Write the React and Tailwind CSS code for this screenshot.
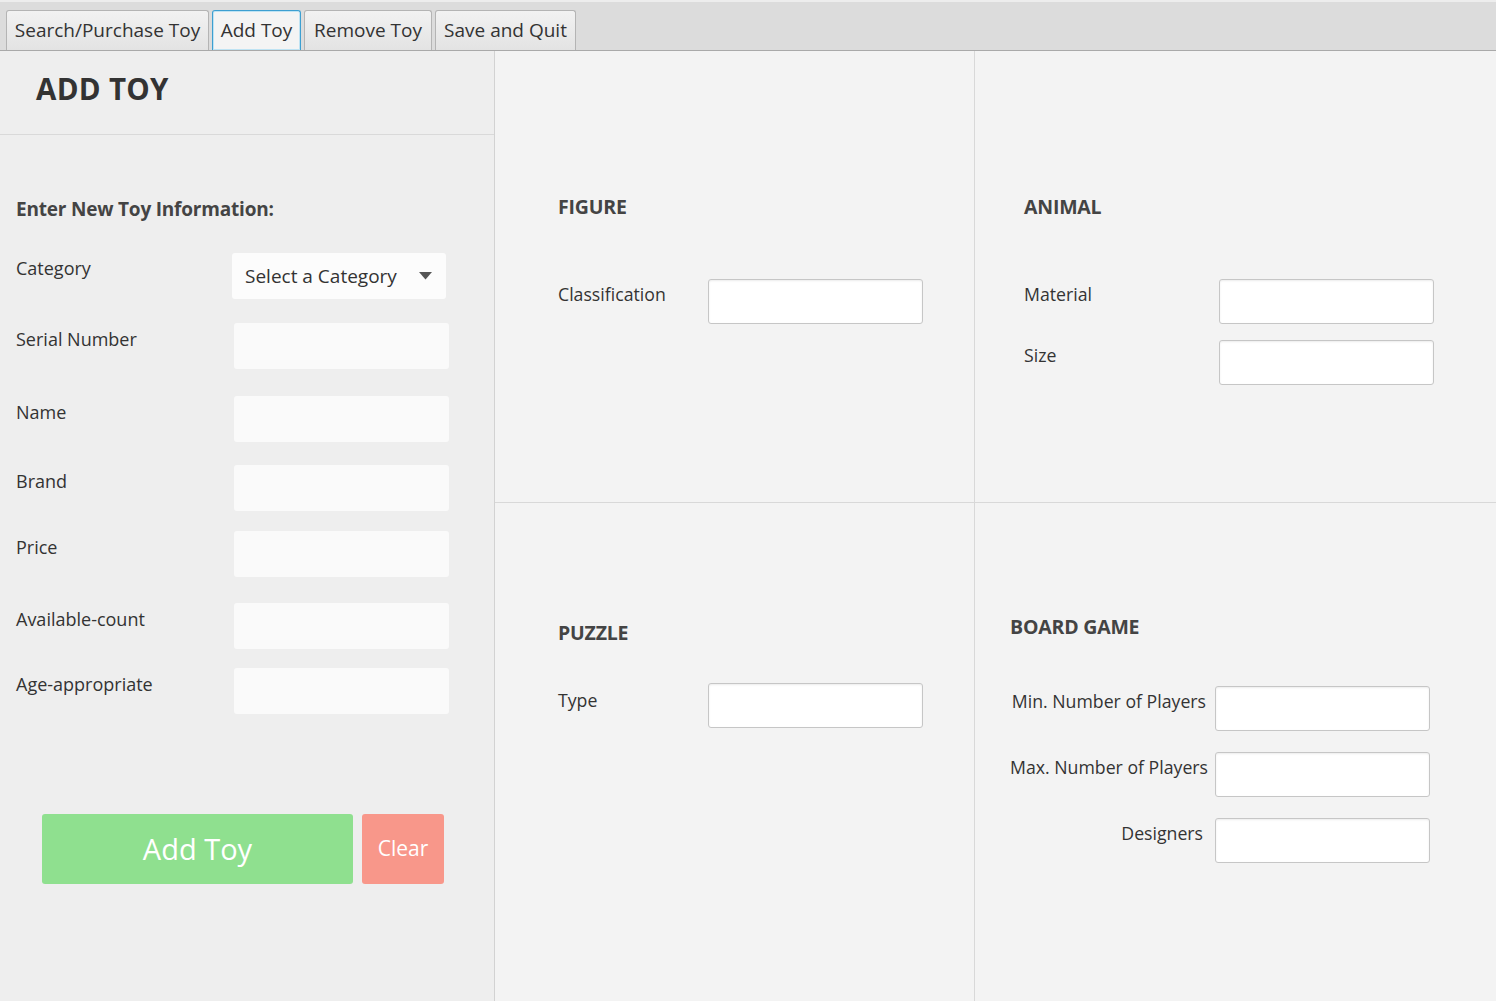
import React from 'react';

const font = { fontFamily: '"Open Sans", "Noto Sans", sans-serif' };

const tabs = [
    { label: 'Search/Purchase Toy', w: 'w-[203px]' },
    { label: 'Add Toy', w: 'w-[89px]', active: true },
    { label: 'Remove Toy', w: 'w-[128px]' },
    { label: 'Save and Quit', w: 'w-[141px]' },
];

const leftRows = [
    { label: 'Serial Number', mt: 'mt-[24px]' },
    { label: 'Name', mt: 'mt-[27px]' },
    { label: 'Brand', mt: 'mt-[23px]' },
    { label: 'Price', mt: 'mt-[20px]' },
    { label: 'Available-count', mt: 'mt-[26px]' },
    { label: 'Age-appropriate', mt: 'mt-[19px]' },
];

function Field({ className = '' }) {
    return (
        <input
            type="text"
            className={`h-[45px] w-[215px] rounded-[3px] border border-[#c6c6c6] bg-white shadow-[inset_0_1px_2px_rgba(0,0,0,0.08)] outline-none ${className}`}
        />
    );
}

function SectionTitle({ children }) {
    return <h2 className="text-[19.5px] font-bold leading-6 text-[#444] tracking-[-0.2px]">{children}</h2>;
}

export default function App() {
    return (
        <div style={font} className="flex h-[1001px] w-[1496px] flex-col overflow-hidden bg-[#f3f3f3] text-[#333]">
            {/* tab bar */}
            <div className="flex h-[51px] shrink-0 items-end gap-[3px] border-t-2 border-b border-t-[#ededed] border-b-[#a9a9a9] bg-[#dcdcdc] pl-[6px]">
                {tabs.map((t) => (
                    <div
                        key={t.label}
                        className={`flex h-[40px] ${t.w} items-center justify-center rounded-t-[3px] border border-b-0 text-[19px] leading-none ${
                            t.active
                                ? 'border-[#3d9fd1] bg-[#f4f4f4] shadow-[inset_0_0_0_1px_#bfe3f3]'
                                : 'border-[#b4b4b4] bg-gradient-to-b from-[#f2f2f2] to-[#e3e3e3]'
                        }`}
                    >
                        {t.label}
                    </div>
                ))}
            </div>

            <div className="flex flex-1">
                {/* left form panel */}
                <div className="w-[495px] shrink-0 border-r border-[#d2d2d2] bg-[#eeeeee]">
                    <div className="flex h-[84px] items-center border-b border-[#d9d9d9] pb-[6px] pl-[36px]">
                        <h1 className="text-[29.5px] font-bold tracking-[0.3px] text-[#333]">ADD TOY</h1>
                    </div>

                    <div className="pl-[16px]">
                        <p className="mt-[61px] text-[19px] font-bold leading-[26px] text-[#444] tracking-[-0.2px]">
                            Enter New Toy Information:
                        </p>

                        <div className="mt-[31px] flex items-start">
                            <span className="w-[216px] pt-[3px] text-[18px] leading-6">Category</span>
                            <div className="flex h-[46px] w-[214px] items-center justify-between rounded-[3px] bg-[#fcfcfc] pl-[13px] pr-[14px]">
                                <span className="text-[19px]">Select a Category</span>
                                <svg width="13" height="8" viewBox="0 0 13 8">
                                    <path d="M0 0h13L6.5 7.5z" fill="#555" />
                                </svg>
                            </div>
                        </div>

                        {leftRows.map((r) => (
                            <div key={r.label} className={`${r.mt} flex items-start`}>
                                <span className="w-[218px] pt-[4px] text-[18px] leading-6">{r.label}</span>
                                <div className="h-[46px] w-[215px] rounded-[3px] bg-[#fafafa]" />
                            </div>
                        ))}

                        <div className="ml-[26px] mt-[100px] flex gap-[9px]">
                            <button className="h-[70px] w-[311px] rounded-[3px] bg-[#8fe08f] text-[29px] text-white">
                                Add Toy
                            </button>
                            <button className="h-[70px] w-[82px] rounded-[3px] bg-[#f8978a] text-[21px] text-white">
                                Clear
                            </button>
                        </div>
                    </div>
                </div>

                {/* category specific panels */}
                <div className="grid flex-1 grid-cols-[480px_1fr] grid-rows-[452px_1fr]">
                    <div className="border-r border-b border-[#d8d8d8] pl-[63px] pt-[144px]">
                        <SectionTitle>FIGURE</SectionTitle>
                        <div className="mt-[60px] flex items-start">
                            <span className="w-[150px] pt-[3px] text-[17.7px] leading-6">Classification</span>
                            <Field />
                        </div>
                    </div>

                    <div className="border-b border-[#d8d8d8] pl-[49px] pt-[144px]">
                        <SectionTitle>ANIMAL</SectionTitle>
                        <div className="mt-[60px] flex items-start">
                            <span className="w-[195px] pt-[3px] text-[17.7px] leading-6">Material</span>
                            <Field />
                        </div>
                        <div className="mt-[16px] flex items-start">
                            <span className="w-[195px] pt-[3px] text-[17.7px] leading-6">Size</span>
                            <Field />
                        </div>
                    </div>

                    <div className="border-r border-[#d8d8d8] pl-[63px] pt-[118px]">
                        <SectionTitle>PUZZLE</SectionTitle>
                        <div className="mt-[38px] flex items-start">
                            <span className="w-[150px] pt-[5px] text-[17.7px] leading-6">Type</span>
                            <Field />
                        </div>
                    </div>

                    <div className="pl-[35px] pt-[112px]">
                        <SectionTitle>BOARD GAME</SectionTitle>
                        <div className="mt-[47px] flex items-start">
                            <span className="w-[196px] whitespace-nowrap pt-[3px] text-right text-[17.7px] leading-6">
                                Min. Number of Players
                            </span>
                            <Field className="ml-[9px] w-[214px]" />
                        </div>
                        <div className="mt-[21px] flex items-start">
                            <span className="w-[198px] whitespace-nowrap pt-[3px] text-right text-[17.7px] leading-6">
                                Max. Number of Players
                            </span>
                            <Field className="ml-[7px] w-[214px]" />
                        </div>
                        <div className="mt-[21px] flex items-start">
                            <span className="w-[193px] whitespace-nowrap pt-[3px] text-right text-[17.7px] leading-6">
                                Designers
                            </span>
                            <Field className="ml-[12px] w-[214px]" />
                        </div>
                    </div>
                </div>
            </div>
        </div>
    );
}
